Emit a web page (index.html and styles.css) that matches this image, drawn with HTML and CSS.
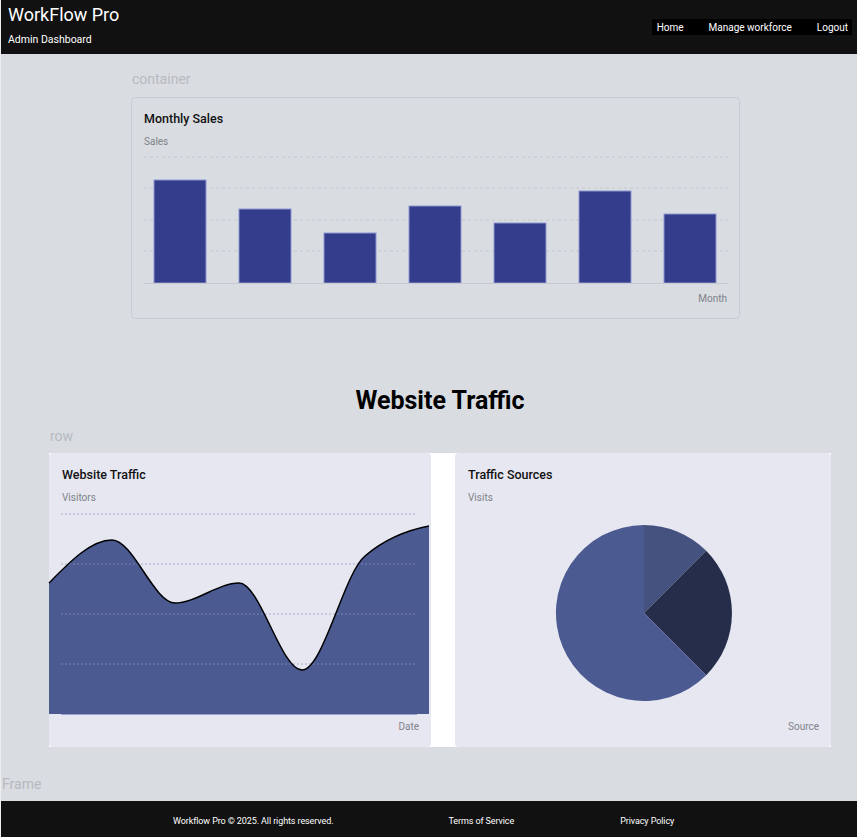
FILE: index.html
```html
<!DOCTYPE html>
<html lang="en">
<head>
    <meta charset="UTF-8">
    <meta name="viewport" content="width=device-width, initial-scale=1.0">
    <title>WorkFlow Pro - Admin Dashboard</title>
    <link rel="stylesheet" href="styles.css">
</head>
<body>

    <header class="topbar">
        <div class="brand">
            <h1>WorkFlow Pro</h1>
            <p>Admin Dashboard</p>
        </div>
        <nav class="nav">
            <a href="#">Home</a>
            <a href="#">Manage workforce</a>
            <a href="#">Logout</a>
        </nav>
    </header>

    <main class="main">
        <div class="label label-container">container</div>
        <section class="card sales-card">
            <h3 class="card-title">Monthly Sales</h3>
            <div class="axis-name">Sales</div>
            <svg class="bar-chart" width="584" height="138" viewBox="0 0 584 138">
                <g class="grid">
                    <line x1="0" y1="7" x2="584" y2="7"/>
                    <line x1="0" y1="38" x2="584" y2="38"/>
                    <line x1="0" y1="70" x2="584" y2="70"/>
                    <line x1="0" y1="101" x2="584" y2="101"/>
                </g>
                <g class="bars">
                    <rect x="10" y="30" width="52" height="103"/>
                    <rect x="95" y="59" width="52" height="74"/>
                    <rect x="180" y="83" width="52" height="50"/>
                    <rect x="265" y="56" width="52" height="77"/>
                    <rect x="350" y="73" width="52" height="60"/>
                    <rect x="435" y="41" width="52" height="92"/>
                    <rect x="520" y="64" width="52" height="69"/>
                </g>
                <line class="axis" x1="0" y1="133.5" x2="584" y2="133.5"/>
            </svg>
            <div class="axis-name right">Month</div>
        </section>

        <h2 class="section-title">Website Traffic</h2>

        <div class="label">row</div>
        <div class="row">
            <section class="card chart-card traffic-card">
                <h3 class="card-title">Website Traffic</h3>
                <div class="axis-name">Visitors</div>
                <svg class="area-chart" width="382" height="210" viewBox="0 0 382 210">
                    <path class="area" d="M1,77 C22,55.6 43,34 64,34 C85,34 106,97 127,97 C148,97 170,77 191,77 C212,77 233,164 254,164 C275,164 296,67 317,50 C338,32 360,24 381,20 L381,208 L1,208 Z"/>
                    <g class="grid dotted">
                        <line x1="13" y1="8" x2="369" y2="8"/>
                        <line x1="13" y1="58" x2="369" y2="58"/>
                        <line x1="13" y1="108" x2="369" y2="108"/>
                        <line x1="13" y1="158" x2="369" y2="158"/>
                    </g>
                    <path class="line" d="M1,77 C22,55.6 43,34 64,34 C85,34 106,97 127,97 C148,97 170,77 191,77 C212,77 233,164 254,164 C275,164 296,67 317,50 C338,32 360,24 381,20"/>
                    <line class="axis soft" x1="13" y1="208.5" x2="369" y2="208.5"/>
                </svg>
                <div class="axis-name right">Date</div>
            </section>
            <section class="card chart-card">
                <h3 class="card-title">Traffic Sources</h3>
                <div class="axis-name">Visits</div>
                <svg class="pie-chart" width="351" height="210" viewBox="0 0 351 210">
                    <path d="M176,107 L176,19 A88,88 0 0 1 238.2,44.8 Z" fill="#45527f"/>
                    <path d="M176,107 L238.2,44.8 A88,88 0 0 1 238.2,169.2 Z" fill="#262d4a"/>
                    <path d="M176,107 L238.2,169.2 A88,88 0 1 1 176,19 Z" fill="#4b5a91"/>
                </svg>
                <div class="axis-name right">Source</div>
            </section>
        </div>

        <div class="label label-frame">Frame</div>
    </main>

    <footer class="footer">
        <span>Workflow Pro © 2025. All rights reserved.</span>
        <a href="#">Terms of Service</a>
        <a href="#">Privacy Policy</a>
    </footer>

</body>
</html>
```

FILE: styles.css
```css
body {
    font-family: Roboto, "Liberation Sans", sans-serif;
    background-color: #d9dce1;
    margin: 0;
    border-left: 1px solid #eceef1;
}
a {
    color: inherit;
    text-decoration: none;
}

/* header */
.topbar {
    height: 54px;
    background-color: #111;
    color: #fff;
    display: flex;
    justify-content: space-between;
    align-items: flex-start;
    padding: 0 5px 0 7px;
}
.brand h1 {
    margin: 4px 0 0;
    font-size: 18px;
    font-weight: 400;
    line-height: 22px;
}
.brand p {
    margin: 7px 0 0;
    font-size: 10.5px;
    line-height: 13px;
}
.nav {
    margin-top: 19px;
    background-color: #000;
    display: flex;
    gap: 25px;
    padding: 0 4px 0 5px;
    height: 16px;
    align-items: center;
    font-size: 10px;
}

/* main */
.main {
    padding: 0 26px 0 48px;
}
.label {
    color: #b7bac0;
    font-size: 14px;
    line-height: 17px;
    padding-left: 1px;
}
.label-container {
    margin: 17px 0 9px 82px;
}
.label-frame {
    margin: 29px 0 8px -48px;
    padding-left: 1px;
}
.card {
    border-radius: 4px;
    padding: 13px 12px 13px 12px;
    box-sizing: border-box;
}
.card-title {
    margin: 0;
    font-size: 12.5px;
    font-weight: 500;
    line-height: 16px;
    color: #111;
}
.axis-name {
    font-size: 10px;
    line-height: 13px;
    color: #808389;
    margin-top: 8px;
}
.axis-name.right {
    text-align: right;
    margin-top: 4px;
}
.sales-card {
    margin-left: 82px;
    width: 609px;
    border: 1px solid #c9ccd3;
}
.bar-chart {
    display: block;
    margin-top: 2px;
}
.grid line {
    stroke: #c6c9d1;
    stroke-dasharray: 3 3;
    stroke-width: 1;
}
.grid.dotted line {
    stroke: #8e95c6;
    stroke-opacity: 0.7;
    stroke-dasharray: 2 2;
}
.bars rect {
    fill: #343c8c;
    stroke: #8e95d0;
    stroke-width: 1;
}
.axis {
    stroke: #c6c9d1;
    stroke-width: 1;
}
.axis.soft {
    stroke: #9aa3d6;
}
.section-title {
    margin: 67px 0 12px;
    text-align: center;
    font-size: 25px;
    font-weight: 700;
    line-height: 30px;
    color: #000;
}

/* row of chart cards */
.row {
    margin-top: 8px;
    display: flex;
    gap: 24px;
    background-color: #fff;
}
.chart-card {
    flex: 1;
    min-width: 0;
    background-color: #e6e7f1;
    height: 294px;
    padding: 14px 12px 13px 13px;
}
.traffic-card {
    flex: 0 0 382px;
}
.area-chart {
    display: block;
    margin: 2px -11px 0 -14px;
}
.area {
    fill: #4b5a91;
}
.line {
    fill: none;
    stroke: #000;
    stroke-width: 1.5;
}
.pie-chart {
    display: block;
    margin-top: 2px;
}

/* footer */
.footer {
    background-color: #111;
    color: #fff;
    height: 36px;
    box-sizing: border-box;
    padding: 3px 0 0 172px;
    display: flex;
    align-items: center;
    font-size: 9px;
    letter-spacing: -0.1px;
}
.footer a:nth-child(2) {
    margin-left: 115px;
}
.footer a:nth-child(3) {
    margin-left: 106px;
}
```
